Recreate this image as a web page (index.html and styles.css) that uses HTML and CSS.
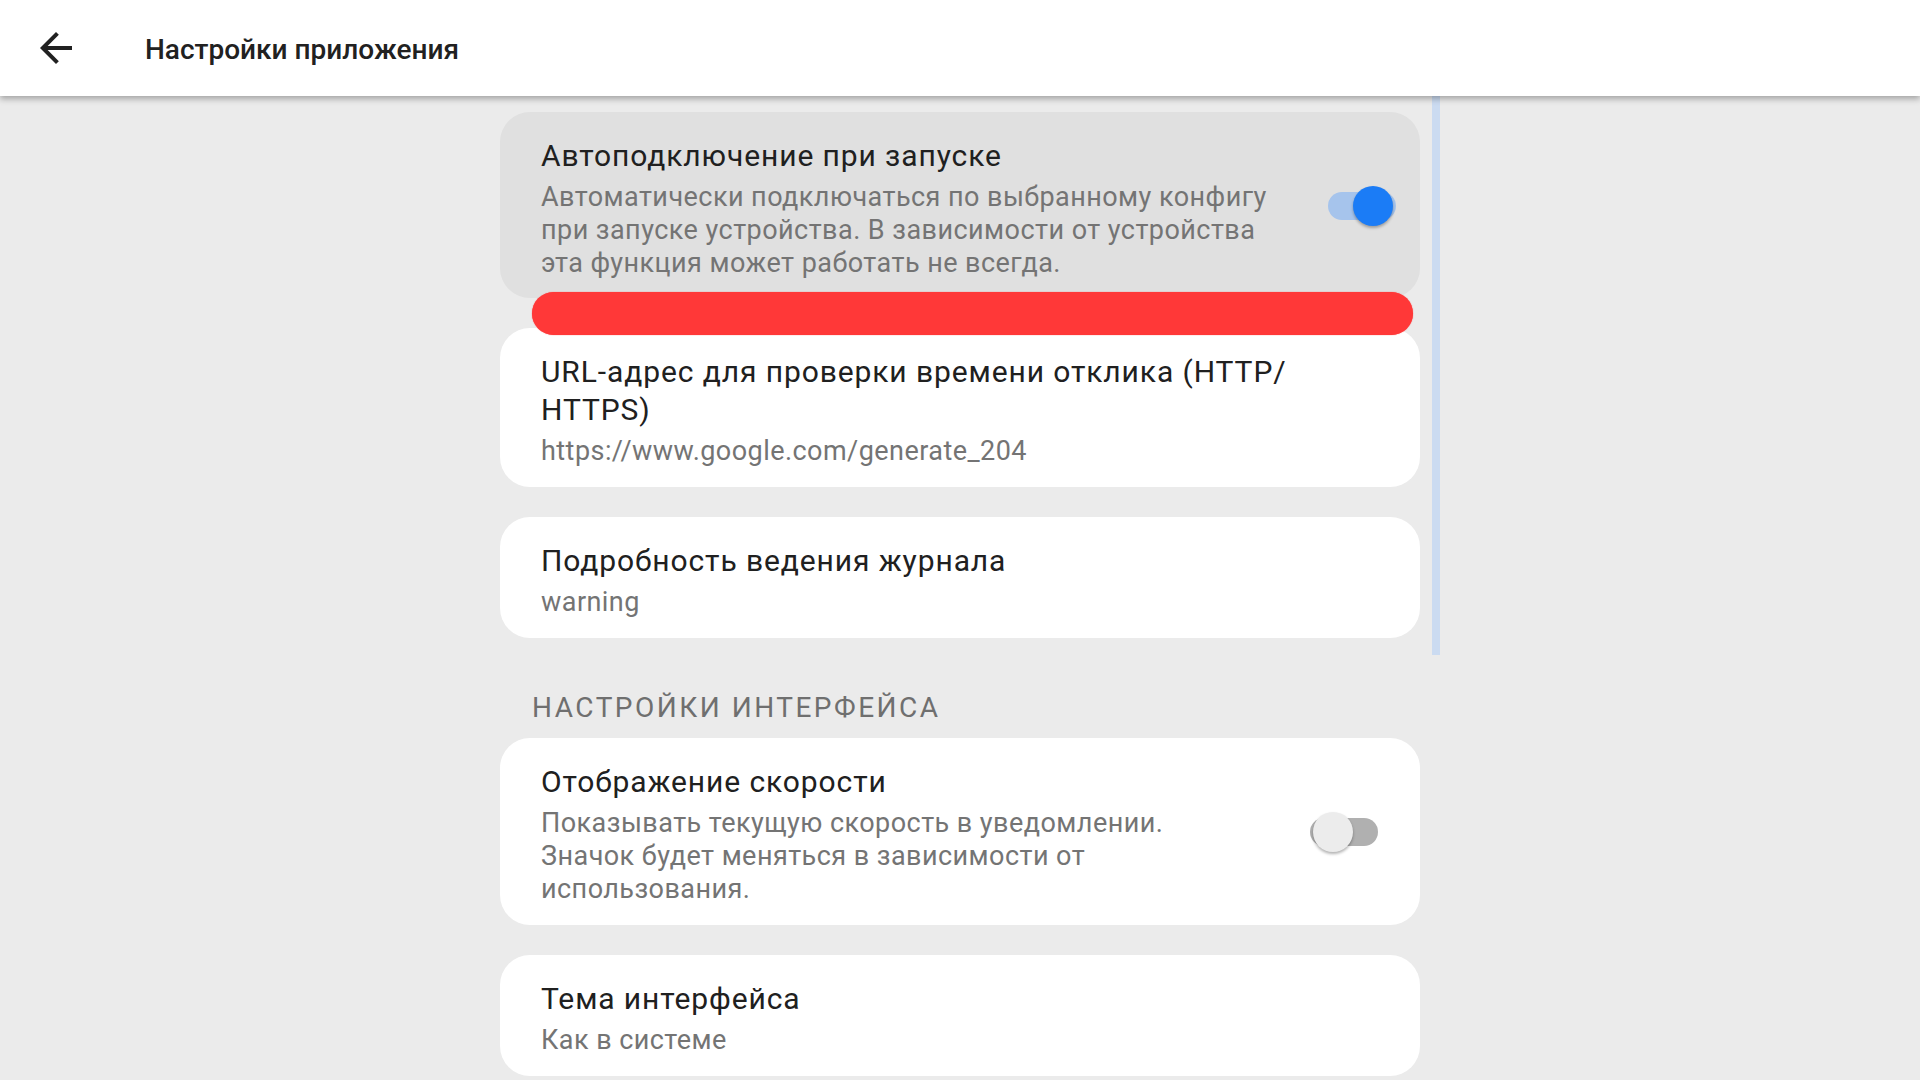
FILE: index.html
```html
<!DOCTYPE html>
<html lang="ru">
  <head>
    <meta charset="UTF-8" />
    <meta name="viewport" content="width=device-width, initial-scale=1.0" />
    <title>Настройки приложения</title>
    <link rel="stylesheet" href="styles.css">
  </head>
  <body>
    <header class="topbar">
      <svg class="back" viewBox="0 0 24 24" width="48" height="48">
        <path d="M20 11H7.83l5.59-5.59L12 4l-8 8 8 8 1.41-1.41L7.83 13H20v-2z" />
      </svg>
      <h1 class="topbar-title">Настройки приложения</h1>
    </header>

    <main class="content">
      <div class="scrollbar"></div>

      <div class="card card-focused">
        <div class="card-text">
          <div class="card-title">Автоподключение при запуске</div>
          <div class="card-sub">
            Автоматически подключаться по выбранному конфигу<br>
            при запуске устройства. В зависимости от устройства<br>
            эта функция может работать не всегда.
          </div>
        </div>
        <div class="switch on"><span class="thumb"></span></div>
      </div>

      <div class="focus-bar"></div>

      <div class="card card-after-bar">
        <div class="card-text">
          <div class="card-title">URL-адрес для проверки времени отклика (HTTP/<br>HTTPS)</div>
          <div class="card-sub">https://www.google.com/generate_204</div>
        </div>
      </div>

      <div class="card">
        <div class="card-text">
          <div class="card-title">Подробность ведения журнала</div>
          <div class="card-sub">warning</div>
        </div>
      </div>

      <h2 class="section">НАСТРОЙКИ ИНТЕРФЕЙСА</h2>

      <div class="card card-first">
        <div class="card-text">
          <div class="card-title">Отображение скорости</div>
          <div class="card-sub">
            Показывать текущую скорость в уведомлении.<br>
            Значок будет меняться в зависимости от<br>
            использования.
          </div>
        </div>
        <div class="switch off"><span class="thumb"></span></div>
      </div>

      <div class="card">
        <div class="card-text">
          <div class="card-title">Тема интерфейса</div>
          <div class="card-sub">Как в системе</div>
        </div>
      </div>
    </main>
  </body>
</html>
```

FILE: styles.css
```css
/* Basic page */
body {
  margin: 0;
  background-color: #ebebeb;
  font-family: Roboto, "Noto Sans", sans-serif;
  height: 1080px;
  overflow: hidden;
}

/* Top bar */
.topbar {
  position: relative;
  z-index: 2;
  height: 96px;
  background-color: #ffffff;
  display: flex;
  align-items: center;
  box-shadow: 0 3px 6px rgba(0, 0, 0, 0.3);
}
.back {
  margin-left: 32px;
  fill: #212121;
}
.topbar-title {
  margin: 0 0 0 65px;
  padding-top: 2px;
  font-size: 28px;
  font-weight: 500;
  color: #212121;
}

/* Settings list */
.content {
  position: relative;
  width: 920px;
  margin: 0 auto;
  padding-top: 16px;
  display: flex;
  flex-direction: column;
}
.scrollbar {
  position: absolute;
  top: 0;
  right: -20px;
  width: 8px;
  height: 559px;
  background-color: #cbdbf1;
}

.card {
  display: flex;
  align-items: center;
  margin-top: 30px;
  padding: 25px 0 19px 41px;
  background-color: #ffffff;
  border-radius: 30px;
}
.card-focused {
  margin-top: 0;
  padding-bottom: 18px;
  background-color: #e0e0e0;
}
.card-after-bar {
  margin-top: 0;
}
.card-first {
  margin-top: 0;
}
.card-text {
  flex: 1;
}
.card-title {
  font-size: 30px;
  line-height: 38px;
  letter-spacing: 0.9px;
  color: #202020;
}
.card-sub {
  margin-top: 6px;
  font-size: 27px;
  line-height: 33px;
  letter-spacing: 0.45px;
  color: #747474;
}

/* Red focus marker */
.focus-bar {
  position: relative;
  z-index: 1;
  height: 43px;
  margin: -6px 7px -7px 32px;
  border-radius: 22px;
  background-color: #ff3838;
  box-shadow: 0 0 1px #ff3838;
}

.section {
  margin: 53px 0 13px 32px;
  font-size: 28px;
  line-height: 34px;
  font-weight: 400;
  letter-spacing: 2.5px;
  color: #6f6f6f;
}

/* Switches */
.switch {
  position: relative;
  width: 68px;
  height: 28px;
  margin-bottom: 6px;
  border-radius: 14px;
  flex-shrink: 0;
}
.switch .thumb {
  position: absolute;
  top: -6px;
  width: 40px;
  height: 40px;
  border-radius: 50%;
  box-shadow: 0 2px 3px rgba(0, 0, 0, 0.3);
}
.switch.on {
  margin-right: 24px;
  background-color: #a6c4ec;
}
.switch.on .thumb {
  right: 3px;
  background-color: #1b7cf6;
}
.switch.off {
  margin-right: 42px;
  background-color: #b0b0b0;
}
.switch.off .thumb {
  left: 3px;
  background-color: #ececec;
}
```
